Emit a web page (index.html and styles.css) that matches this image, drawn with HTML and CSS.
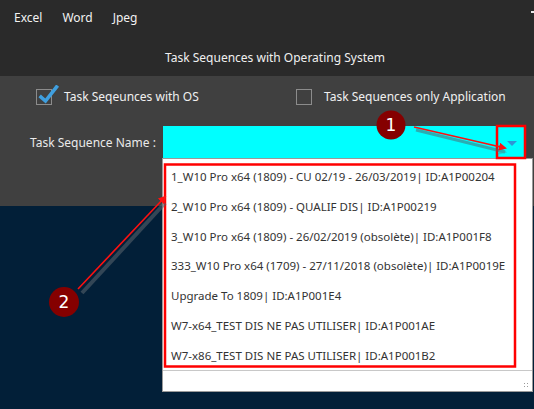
FILE: index.html
```html
<!DOCTYPE html>
<html>
<head>
<meta charset="utf-8">
<link rel="stylesheet" href="styles.css">
</head>
<body>
<div class="app">
  <header class="topbar">
    <nav class="menu">
      <span class="menu-item">Excel</span>
      <span class="menu-item">Word</span>
      <span class="menu-item">Jpeg</span>
    </nav>
    <div class="title">Task Sequences with Operating System</div>
    <span class="corner-dash"></span>
  </header>
  <section class="panel">
    <div class="options">
      <label class="opt opt-os">
        <span class="box"><svg class="check" width="22" height="20" viewBox="0 0 22 20"><path d="M3 12 L7.5 16 L18.5 2" fill="none" stroke="#3f9fdf" stroke-width="3.6" stroke-linecap="square"/></svg></span>
        <span class="opt-text">Task Seqeunces with OS</span>
      </label>
      <label class="opt opt-app">
        <span class="box"></span>
        <span class="opt-text">Task Sequences only Application</span>
      </label>
    </div>
    <div class="name-row">
      <span class="name-label">Task Sequence Name :</span>
      <div class="combo">
        <span class="combo-arrow"></span>
      </div>
    </div>
  </section>
  <main class="desk"></main>

  <div class="dropdown">
    <ul class="list">
      <li>1_W10 Pro x64 (1809) - CU 02/19 - 26/03/2019| ID:A1P00204</li>
      <li>2_W10 Pro x64 (1809) - QUALIF DIS| ID:A1P00219</li>
      <li>3_W10 Pro x64 (1809) - 26/02/2019 (obsolète)| ID:A1P001F8</li>
      <li>333_W10 Pro x64 (1709) - 27/11/2018 (obsolète)| ID:A1P0019E</li>
      <li>Upgrade To 1809| ID:A1P001E4</li>
      <li>W7-x64_TEST DIS NE PAS UTILISER| ID:A1P001AE</li>
      <li>W7-x86_TEST DIS NE PAS UTILISER| ID:A1P001B2</li>
    </ul>
    <div class="footer"><span class="grip"></span></div>
  </div>

  <svg class="annot" width="534" height="409" viewBox="0 0 534 409">
    <defs>
      <marker id="ah" markerWidth="8" markerHeight="8" refX="6" refY="4" orient="auto" markerUnits="userSpaceOnUse">
        <path d="M0 0 L8 4 L0 8 Z" fill="#ff1010"/>
      </marker>
      <marker id="ahs" markerWidth="8" markerHeight="8" refX="6" refY="4" orient="auto" markerUnits="userSpaceOnUse">
        <path d="M0 0 L8 4 L0 8 Z" fill="#5a6470" opacity="0.6"/>
      </marker>
    </defs>
    <rect x="165" y="164.5" width="350" height="202" fill="none" stroke="#ff0000" stroke-width="2.5"/>
    <rect x="497" y="126" width="28" height="32" fill="none" stroke="#ff0000" stroke-width="2.5"/>
    <line x1="416" y1="130" x2="505" y2="152" stroke="#55606a" stroke-width="3" opacity="0.5" marker-end="url(#ahs)"/>
    <line x1="414" y1="127" x2="505" y2="148" stroke="#ff1010" stroke-width="1.6" marker-end="url(#ah)"/>
    <circle cx="391" cy="125" r="14.5" fill="#850000"/>
    <text x="391" y="131" class="num">1</text>
    <line x1="82" y1="293" x2="165" y2="203" stroke="#55606a" stroke-width="4" opacity="0.6"/>
    <line x1="78" y1="289" x2="165" y2="197" stroke="#ff1010" stroke-width="1.6" marker-end="url(#ah)"/>
    <circle cx="64" cy="302" r="15" fill="#850000"/>
    <text x="64" y="308" class="num">2</text>
  </svg>
</div>
</body>
</html>
```
FILE: styles.css
```css
* { box-sizing: border-box; margin: 0; padding: 0; }
html, body { width: 534px; height: 409px; overflow: hidden; }
body {
  background: #021f38;
  font-family: "Noto Sans", "Open Sans", sans-serif;
  color: #fff;
}
.app { position: relative; width: 534px; height: 409px; display: flex; flex-direction: column; }
.topbar {
  position: relative;
  height: 76px;
  background: #2a2a2a;
  display: flex;
  flex-direction: column;
}
.menu {
  display: flex;
  gap: 20px;
  padding: 8px 0 0 14px;
  height: 28px;
  font-size: 12px;
  line-height: 20px;
  color: #f2f2f2;
}
.title {
  margin-top: 20px;
  text-align: center;
  font-size: 12px;
  line-height: 20px;
  color: #f0f0f0;
  padding-left: 16px;
}
.corner-dash {
  position: absolute;
  right: 0;
  top: 11px;
  width: 3px;
  height: 2px;
  background: #e8e8e8;
}
.panel {
  height: 130px;
  background: #404040;
  display: flex;
  flex-direction: column;
}
.options {
  display: flex;
  height: 50px;
  padding-top: 13px;
}
.opt { display: flex; align-items: flex-start; font-size: 12px; color: #f0f0f0; }
.opt-os { margin-left: 36px; width: 260px; }
.box {
  position: relative;
  width: 16px;
  height: 16px;
  border: 1px solid #8c8c8c;
  flex: none;
}
.check { position: absolute; left: 1px; top: -5px; }
.opt-text { margin-left: 12px; line-height: 16px; }
.name-row { display: flex; align-items: center; height: 32px; }
.name-label {
  width: 163px;
  padding-left: 30px;
  font-size: 12px;
  color: #eaeaea;
}
.combo {
  position: relative;
  width: 361px;
  height: 32px;
  background: #00ffff;
}
.combo-arrow {
  position: absolute;
  right: 7px;
  top: 15px;
  width: 0;
  height: 0;
  border-left: 5px solid transparent;
  border-right: 5px solid transparent;
  border-top: 5px solid #2f95d5;
}
.desk { flex: 1; background: #021f38; }
.dropdown {
  position: absolute;
  left: 162px;
  top: 158px;
  width: 371px;
  height: 234px;
  background: #fff;
  border: 1px solid #9a9a9a;
  display: flex;
  flex-direction: column;
}
.list {
  list-style: none;
  height: 212px;
  padding-top: 3px;
  border-bottom: 1px solid #c8c8c8;
}
.list li {
  height: 29.8px;
  line-height: 29.8px;
  padding-left: 8px;
  font-size: 11.5px;
  color: #333;
  white-space: nowrap;
}
.footer { position: relative; flex: 1; background: #fff; }
.grip {
  position: absolute;
  right: 3px;
  bottom: 3px;
  width: 6px;
  height: 6px;
  background:
    radial-gradient(circle, #9a9a9a 0.8px, transparent 1px) 0 0 / 3px 3px;
}
.annot { position: absolute; left: 0; top: 0; pointer-events: none; }
.num {
  fill: #fff;
  font-family: "DejaVu Sans", sans-serif;
  font-size: 17px;
  text-anchor: middle;
}
```
